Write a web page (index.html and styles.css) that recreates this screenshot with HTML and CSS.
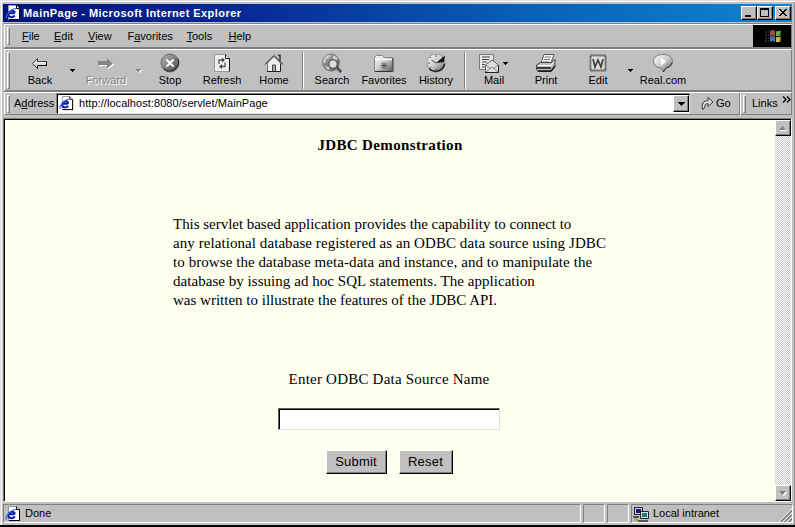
FILE: index.html
```html
<!DOCTYPE html>
<html lang="en">
<head>
<meta charset="utf-8">
<title>MainPage - Microsoft Internet Explorer</title>
<link rel="stylesheet" href="styles.css">
</head>
<body>
<svg class="defs" width="0" height="0">
  <defs>
    <linearGradient id="metal" x1="0" y1="0" x2="1" y2="1"><stop offset="0" stop-color="#fff"/><stop offset=".5" stop-color="#ccc"/><stop offset="1" stop-color="#555"/></linearGradient>
    <linearGradient id="ball" x1="0" y1="0" x2="1" y2="1"><stop offset="0" stop-color="#bbb"/><stop offset="1" stop-color="#444"/></linearGradient>
    <symbol id="ie" viewBox="0 0 16 16">
      <path d="M3.500 .5h8l3 3v11h-11z" fill="#fff" stroke="#999"/>
      <path d="M14.500 4v11M4 14.500h11" stroke="#000" fill="none"/>
      <path d="M11.500 .5v3h3" fill="none" stroke="#000"/>
      <path d="M9.800 10.500C7 13.500 3 12 3.300 8.800C3.600 6 8 4.600 9.500 6.800Q10 8 8.500 8.300H4" fill="none" stroke="#0818b0" stroke-width="2"/>
      <path d="M1.500 13.500C-.5 11.500 6 3.500 11 3.500" fill="none" stroke="#3868d8" stroke-width="1.200"/>
    </symbol>
    <symbol id="down" viewBox="0 0 7 4"><path d="M0 0h7v1H6v1H5v1H4v1H3V3H2V2H1V1H0z"/></symbol>
    <symbol id="small" viewBox="0 0 5 3"><path d="M0 0h5v1H4v1H3v1H2V2H1V1H0z"/></symbol>
  </defs>
</svg>
<div class="window">
  <header class="title">
    <svg class="ie"><use href="#ie"/></svg>
    <h1>MainPage - Microsoft Internet Explorer</h1>
    <div class="controls">
      <button class="ctl" aria-label="Minimize"><svg width="12" height="10"><path d="M2 7h6v2H2z"/></svg></button>
      <button class="ctl" aria-label="Maximize"><svg width="12" height="10"><path d="M1 0h9v9H1zM2 2v6h7V2z" fill-rule="evenodd"/></svg></button>
      <button class="ctl close" aria-label="Close"><svg width="12" height="10"><path d="M2 1h2v1h1v1h2V2h1V1h2v1H9v1H8v1H7v1h1v1h1v1h1v1H8V7H7V6H5v1H4v1H2V7h1V6h1V5h1V4H4V3H3V2H2z"/></svg></button>
    </div>
  </header>

  <nav class="band menu">
    <i class="grip"></i>
    <span class="m1"><u>F</u>ile</span><span class="m2"><u>E</u>dit</span><span class="m3"><u>V</u>iew</span><span class="m4">F<u>a</u>vorites</span><span class="m5"><u>T</u>ools</span><span class="m6"><u>H</u>elp</span>
    <svg class="brand" width="38" height="22"><rect width="38" height="22"/>
      <path d="M17 6q3-2 5 0v5q-3-1-5 0z" fill="#a54a35"/><path d="M23 6q2 1 5-1v5q-3 2-5 1z" fill="#6da944"/><path d="M17 12q3-2 5 0v5q-3-2-5 0z" fill="#3e76b5"/><path d="M23 12q2 1 5-1v5q-3 2-5 1z" fill="#d0b84d"/>
      <path d="M12 7h4M12 10h4M12 13h4M12 16h4" stroke="#5b4a83" stroke-dasharray="2 1"/><path d="M22.500 5v12M28 4v12" stroke="#111"/>
    </svg>
  </nav>

  <div class="band tools">
    <i class="grip"></i>
    <div class="tool back"><svg width="20" height="20"><path d="M2.500 10.500l5-5v3h9v4h-9v3z" fill="#ddd" stroke="#444"/><path d="M5 9.500h11" stroke="#fff"/><path d="M7.500 15.500v-3h9v-4" fill="none" stroke="#000"/></svg><span>Back</span></div>
    <svg class="drop d1"><use href="#small"/></svg>
    <div class="tool fwd"><svg width="20" height="20"><path d="M3 9h9V6l6 5.500-6 5V13H3z" fill="#fff"/><path d="M2 8h9V5l6 5.500-6 5V12H2z" fill="#858585"/></svg><span>Forward</span></div>
    <svg class="drop d2"><use href="#small"/></svg>
    <div class="tool"><svg width="20" height="20"><circle cx="10" cy="10" r="9" fill="url(#ball)" stroke="#666"/><path d="M4 16a9 9 0 0 0 14-10" fill="none" stroke="#222"/><path d="M6.500 6.500l7 7M13.500 6.500l-7 7" stroke="#fff" stroke-width="2.200"/></svg><span>Stop</span></div>
    <div class="tool refresh"><svg width="20" height="20"><path d="M2.500 1.500h11l4 4v13h-15z" fill="#eee" stroke="#999"/><path d="M13.500 1.500v4h4v13" fill="none" stroke="#111"/><path d="M7 11V7h4M13 9.500v4H9" fill="none" stroke="#555" stroke-width="1.300"/><path d="M10 4.500l3 2.500-3 2.500zM10 11l-3 2.500 3 2.500z" fill="#444"/></svg><span>Refresh</span></div>
    <div class="tool"><svg width="20" height="20"><path d="M14 2.500h2V8" fill="#ddd" stroke="#333" stroke-width="1.500"/><path d="M3.500 10v8.500h13V10L10 3.500z" fill="#eee" stroke="#777"/><path d="M1 11.500l9-9 9 9" fill="none" stroke="#222"/><path d="M3 18.500h13.500V11" fill="none" stroke="#222"/><path d="M8.500 18v-6h3v6" fill="#aaa" stroke="#444"/></svg><span>Home</span></div>
    <i class="sep"></i>
    <div class="tool search"><svg width="22" height="20"><circle cx="10" cy="9.500" r="8.500" fill="url(#ball)" stroke="#777"/><path d="M3 5q3-4 7-3l-2 3-3 1-1 4-2 0zM12 2l5 3-2 3-3-2zM4 13l4 1 1 3-3-1z" fill="#ccc"/><circle cx="12" cy="11" r="4.200" fill="#ddd" stroke="#666" stroke-width="1.400"/><path d="M15 14l5 5" stroke="#222" stroke-width="2.500"/><path d="M14.500 14l4.500 4.500" stroke="#bbb"/></svg><span>Search</span></div>
    <div class="tool"><svg width="20" height="20"><path d="M.5 18.500v-14l2-2h6l2 2h8v14z" fill="url(#metal)" stroke="#888"/><path d="M1 6.500h17" stroke="#fff"/><path d="M1 18.500h18V5" fill="none" stroke="#333"/><path d="M10 9v7M6.500 12.500h7M7.500 10l5 5M12.500 10l-5 5" stroke="#444" stroke-width=".8"/></svg><span>Favorites</span></div>
    <div class="tool hist"><svg width="20" height="20"><circle cx="10" cy="10" r="9" fill="url(#metal)" stroke="#999"/><path d="M3 15.500a9 9 0 0 0 15.500-4.500" fill="none" stroke="#222" stroke-width="1.500"/><path d="M10 10l9-7.500-1 6.500z" fill="#111"/><path d="M10 10L5.500 7" stroke="#444"/><path d="M10 2v2M2 10h2M10 16v2M4 4l1 1M4 15l1-1" stroke="#555"/></svg><span>History</span></div>
    <i class="sep"></i>
    <div class="tool mail"><svg width="32" height="20"><path d="M1.500 1.500h14v15h-14z" fill="#e8e8e8" stroke="#777"/><path d="M4 4h8M4 6.500h7M4 9h5M4 11.500h3M4 14h3" stroke="#444"/><path d="M7.500 12l6.500-5 6.500 5v7.500h-13z" fill="#ddd" stroke="#666"/><path d="M8 19l6-5 6 5M8 12l5 4M20 12l-5 4" fill="none" stroke="#888"/><path d="M7 19.500h13.500V12" fill="none" stroke="#222"/><path d="M25 9h5v1h-1v1h-1v1h-1v-1h-1v-1h-1z"/></svg><span>Mail</span></div>
    <div class="tool"><svg width="20" height="20"><path d="M5 10l3-8.500h10l-3 8.500z" fill="#f5f5f5" stroke="#555"/><path d="M9 4h6M8 6.500h6M7 9h6" stroke="#777"/><path d="M.5 12l4-2.500h11l3.500-3v7l-4 5H2l-1.500-2z" fill="#bbb" stroke="#444"/><path d="M2 12.500h13l3-4" fill="none" stroke="#fff"/><path d="M1 15h14M2 18h13l4-5" fill="none" stroke="#111" stroke-width="1.300"/></svg><span>Print</span></div>
    <div class="tool"><svg width="20" height="20"><path d="M2.500 2.500h15v15h-15z" fill="#ddd" stroke="#222" stroke-width="2" stroke-dasharray="1 1"/><path d="M5 6l2 8 3-7 3 7 2-8" fill="none" stroke="#444" stroke-width="1.800"/></svg><span>Edit</span></div>
    <svg class="drop d3"><use href="#small"/></svg>
    <div class="tool real"><svg width="20" height="20"><path d="M8 15Q.5 14 .5 8.500C.5 4 5 1.500 10 1.500s9.500 2.500 9.500 7c0 4-3 5.500-6 6.500l-3 4z" fill="url(#metal)" stroke="#777"/><path d="M8 4.500l5 4-5 4z" fill="#fff"/><path d="M19 10q-1 4-6 5l-3 4" fill="none" stroke="#333"/></svg><span>Real.com</span></div>
  </div>

  <div class="band address">
    <i class="grip"></i>
    <label>A<u>d</u>dress</label>
    <div class="combo"><svg class="ie"><use href="#ie"/></svg><span>http://localhost:8080/servlet/MainPage</span><button class="bevel" aria-label="Open"><svg width="7" height="4"><use href="#down"/></svg></button></div>
    <div class="go"><svg width="13" height="15"><path d="M1.500 13.500Q-.5 5 7 4.500v-3l5 4.500-5 4.500v-3Q3 8 4 11.500z" fill="#ddd" stroke="#333"/></svg><span>Go</span></div>
    <i class="divide"></i>
    <i class="grip second"></i>
    <span class="links">Links</span>
    <svg class="chev" width="9" height="7"><path d="M1 .5l3 3-3 3M5 .5l3 3-3 3" fill="none" stroke="#000" stroke-width="1.300"/></svg>
  </div>

  <section class="view">
    <main>
      <h2><span>JDBC Demonstration</span></h2>
      <p class="intro"><span class="l1">This servlet based application provides the capability to connect to</span><span class="l2">any relational database registered as an ODBC data source using JDBC</span><span class="l3">to browse the database meta-data and instance, and to manipulate the</span><span class="l4">database by issuing ad hoc SQL statements. The application</span><span class="l5">was written to illustrate the features of the JDBC API.</span></p>
      <form>
        <label for="dsn">Enter ODBC Data Source Name</label>
        <input id="dsn" type="text">
        <div class="actions"><button type="button" class="submit">Submit</button><button type="button" class="reset">Reset</button></div>
      </form>
    </main>
    <div class="scroll"><span class="bevel"><svg width="8" height="5"><path d="M4.500 1L8.500 5H1z" fill="#fff"/><path d="M3.500 0L7 4H0z" fill="#808080"/></svg></span><span class="bevel"><svg width="8" height="5"><path d="M1 1h7.500L5 5z" fill="#fff"/><path d="M0 0h7L3.500 4z" fill="#808080"/></svg></span></div>
  </section>

  <footer>
    <div class="pane main"><svg class="ie"><use href="#ie"/></svg><span>Done</span></div>
    <div class="pane"></div>
    <div class="pane"></div>
    <div class="pane zone">
      <svg width="16" height="16"><path d="M1.500 1.500h8v7h-8z" fill="#ccc" stroke="#222"/><path d="M3 3h5v4H3z" fill="#0818a0"/><path d="M7.500 5.500h8v7h-8z" fill="#ddd" stroke="#222"/><path d="M9 7h5v4H9z" fill="#078383"/><path d="M0 10h6v2H0zM5 14h10v2H5z" fill="#555"/><path d="M1 14h4M3 12v2" stroke="#9a8420"/></svg>
      <span>Local intranet</span>
      <svg class="size" width="13" height="13"><path d="M0 13L13 0M4 13l9-9M8 13l5-5" stroke="#fff"/><path d="M1.500 13L13 1.500M5.500 13L13 5.500M9.500 13L13 9.500" stroke="#777" stroke-width="1.400"/></svg>
    </div>
  </footer>
</div>
</body>
</html>
```

FILE: styles.css
```css
* { box-sizing: border-box; }
body { margin: 0; width: 795px; height: 527px; overflow: hidden; background: #c0c0c0; color: #000; font: 11px/13px "Liberation Sans", Arial, sans-serif; }
.defs { position: absolute; }
svg { display: block; flex: none; }
button { padding: 0; font: inherit; color: #000; }
span, label { white-space: nowrap; }
u { text-decoration: underline; text-underline-offset: 1px; text-decoration-thickness: 1px; text-decoration-skip-ink: none; }
.window { width: 795px; height: 527px; display: flex; flex-direction: column; padding: 4px 3px 0 3px; border-bottom: 2px solid #000; box-shadow: inset 0 1px #ddd, inset 0 2px #fff, inset 1px 0 #ddd, inset 2px 0 #fff, inset -1px 0 #909090; }
.ie { width: 16px; height: 16px; }

.title { height: 18px; display: flex; align-items: center; padding: 0 1px 0 2px; background: linear-gradient(90deg, #001478, #082894 30%, #0860b8 66%, #1084d0); color: #fff; }
.title h1 { margin: 0 auto 0 2px; font: bold 11px/18px "Liberation Sans", Arial, sans-serif; letter-spacing: .44px; white-space: nowrap; }
.controls { display: flex; }
.ctl, .bevel { display: flex; align-items: center; justify-content: center; background: #c0c0c0; border: 1px solid; border-color: #fff #000 #000 #fff; box-shadow: inset -1px -1px #808080; }
.ctl { width: 16px; height: 14px; }
.close { margin-left: 2px; }

.band { display: flex; border: 1px solid; border-color: #fff #808080 #808080 #fff; box-shadow: 0 -1px #808080; width: 788px; margin-left: 1px; }
.grip { flex: none; width: 3px; border: 1px solid; border-color: #fff #808080 #808080 #fff; }
.menu { height: 24px; margin-top: 2px; align-items: center; }
.menu .grip, .address .grip { height: 18px; margin-left: 2px; }
.menu span { flex: none; }
.m1 { width: 32px; margin-left: 12px; } .m2 { width: 34px; } .m3 { width: 39.500px; } .m4 { width: 59px; } .m5 { width: 42px; } .m6 { width: 40px; }
.brand { margin-left: auto; }

.tools { height: 42px; margin-top: 1px; }
.tools > .grip { height: 37px; margin: 2px 0 0 2px; }
.tool { flex: none; width: 52px; display: flex; flex-direction: column; align-items: center; padding-top: 3px; }
.tool span { margin-top: 1px; }
.tool svg { height: 20px; }
.back { margin-left: 4px; }
.fwd { width: 54px; color: #858585; text-shadow: 1px 1px #fff; }
.drop { width: 5px; height: 3px; margin-top: 19px; }
.d1 { margin-left: 4px; margin-right: 4px; }
.d2 { margin-left: 3px; margin-right: 3px; fill: #858585; filter: drop-shadow(1px 1px #fff); }
.d3 { margin-left: 4px; margin-right: 4px; }
.sep { flex: none; width: 2px; height: 37px; margin: 2px 2px 0; border-left: 1px solid #808080; border-right: 1px solid #fff; }

.address { height: 23px; margin-top: 1px; align-items: center; }
.address label { margin: 0 0 1px 4px; width: 43px; }
.combo { width: 633px; height: 20px; display: flex; align-items: center; background: #fff; border: 1px solid; border-color: #000 #dfdfdf #dfdfdf #000; box-shadow: -1px -1px #808080; padding-left: 1px; }
.combo .ie { width: 15px; height: 15px; }
.combo span { margin-left: 5px; letter-spacing: .06px; }
.combo .bevel { width: 16px; height: 17px; margin-left: auto; }
.go { display: flex; align-items: center; gap: 2px; margin-left: 11px; width: 39px; }
.go span, .links { margin-bottom: 1px; }
.divide { width: 2px; height: 22px; margin-left: -1px; border-left: 1px solid #808080; border-right: 1px solid #fff; }
.links { margin-left: 6px; }
.chev { margin: 0 0 8px 4px; }

.view { height: 384px; margin-top: 3px; display: flex; border: 1px solid; border-color: #808080 #fff #fff #808080; box-shadow: inset 1px 1px #000; padding: 1px 0 0 1px; width: 789px; }
main { flex: 1; background: #fffff0; font: 15px/19px "Liberation Serif", "Times New Roman", serif; }
h2 { margin: 16px 0 0; text-align: center; font-size: 15px; line-height: 19px; letter-spacing: .36px; }
.intro { margin: 60px 0 0 168px; display: flex; flex-direction: column; align-items: flex-start; }
.l1 { letter-spacing: -.03px; } .l2 { letter-spacing: .07px; } .l3 { letter-spacing: .07px; } .l4 { letter-spacing: .04px; }
form { margin: 60px 2px 0 0; display: flex; flex-direction: column; align-items: center; }
form label { letter-spacing: .22px; }
input { width: 222px; height: 22px; margin: 19px 0 0; border: 1px solid; border-color: #606060 #dfdfdf #dfdfdf #606060; background: #fff; box-shadow: inset 1px 1px #000; }
.actions { display: flex; gap: 12px; margin-top: 20px; }
.actions button { height: 24px; background: #c0c0c0; border: 1px solid; border-color: #fff #000 #000 #fff; box-shadow: inset -1px -1px #808080; font: 13px/20px "Liberation Sans", Arial, sans-serif; letter-spacing: .2px; }
.submit { width: 61px; }
.reset { width: 54px; }
.scroll { width: 16px; display: flex; flex-direction: column; justify-content: space-between; background: repeating-conic-gradient(#fff 0 25%, #c8c8c8 0 50%) 0 0 / 2px 2px; }
.scroll .bevel { width: 16px; height: 16px; }

footer { display: flex; gap: 2px; height: 20px; margin-top: 2px; }
.pane { flex: none; width: 22px; height: 19px; display: flex; align-items: center; border: 1px solid; border-color: #808080 #fff #fff #808080; }
.pane.main { width: 578px; padding-left: 1px; }
.pane.main span { margin-left: 4px; }
.zone { width: 162px; padding-left: 1px; }
.zone span { margin-left: 4px; }
.size { margin-left: auto; align-self: flex-end; }
```
